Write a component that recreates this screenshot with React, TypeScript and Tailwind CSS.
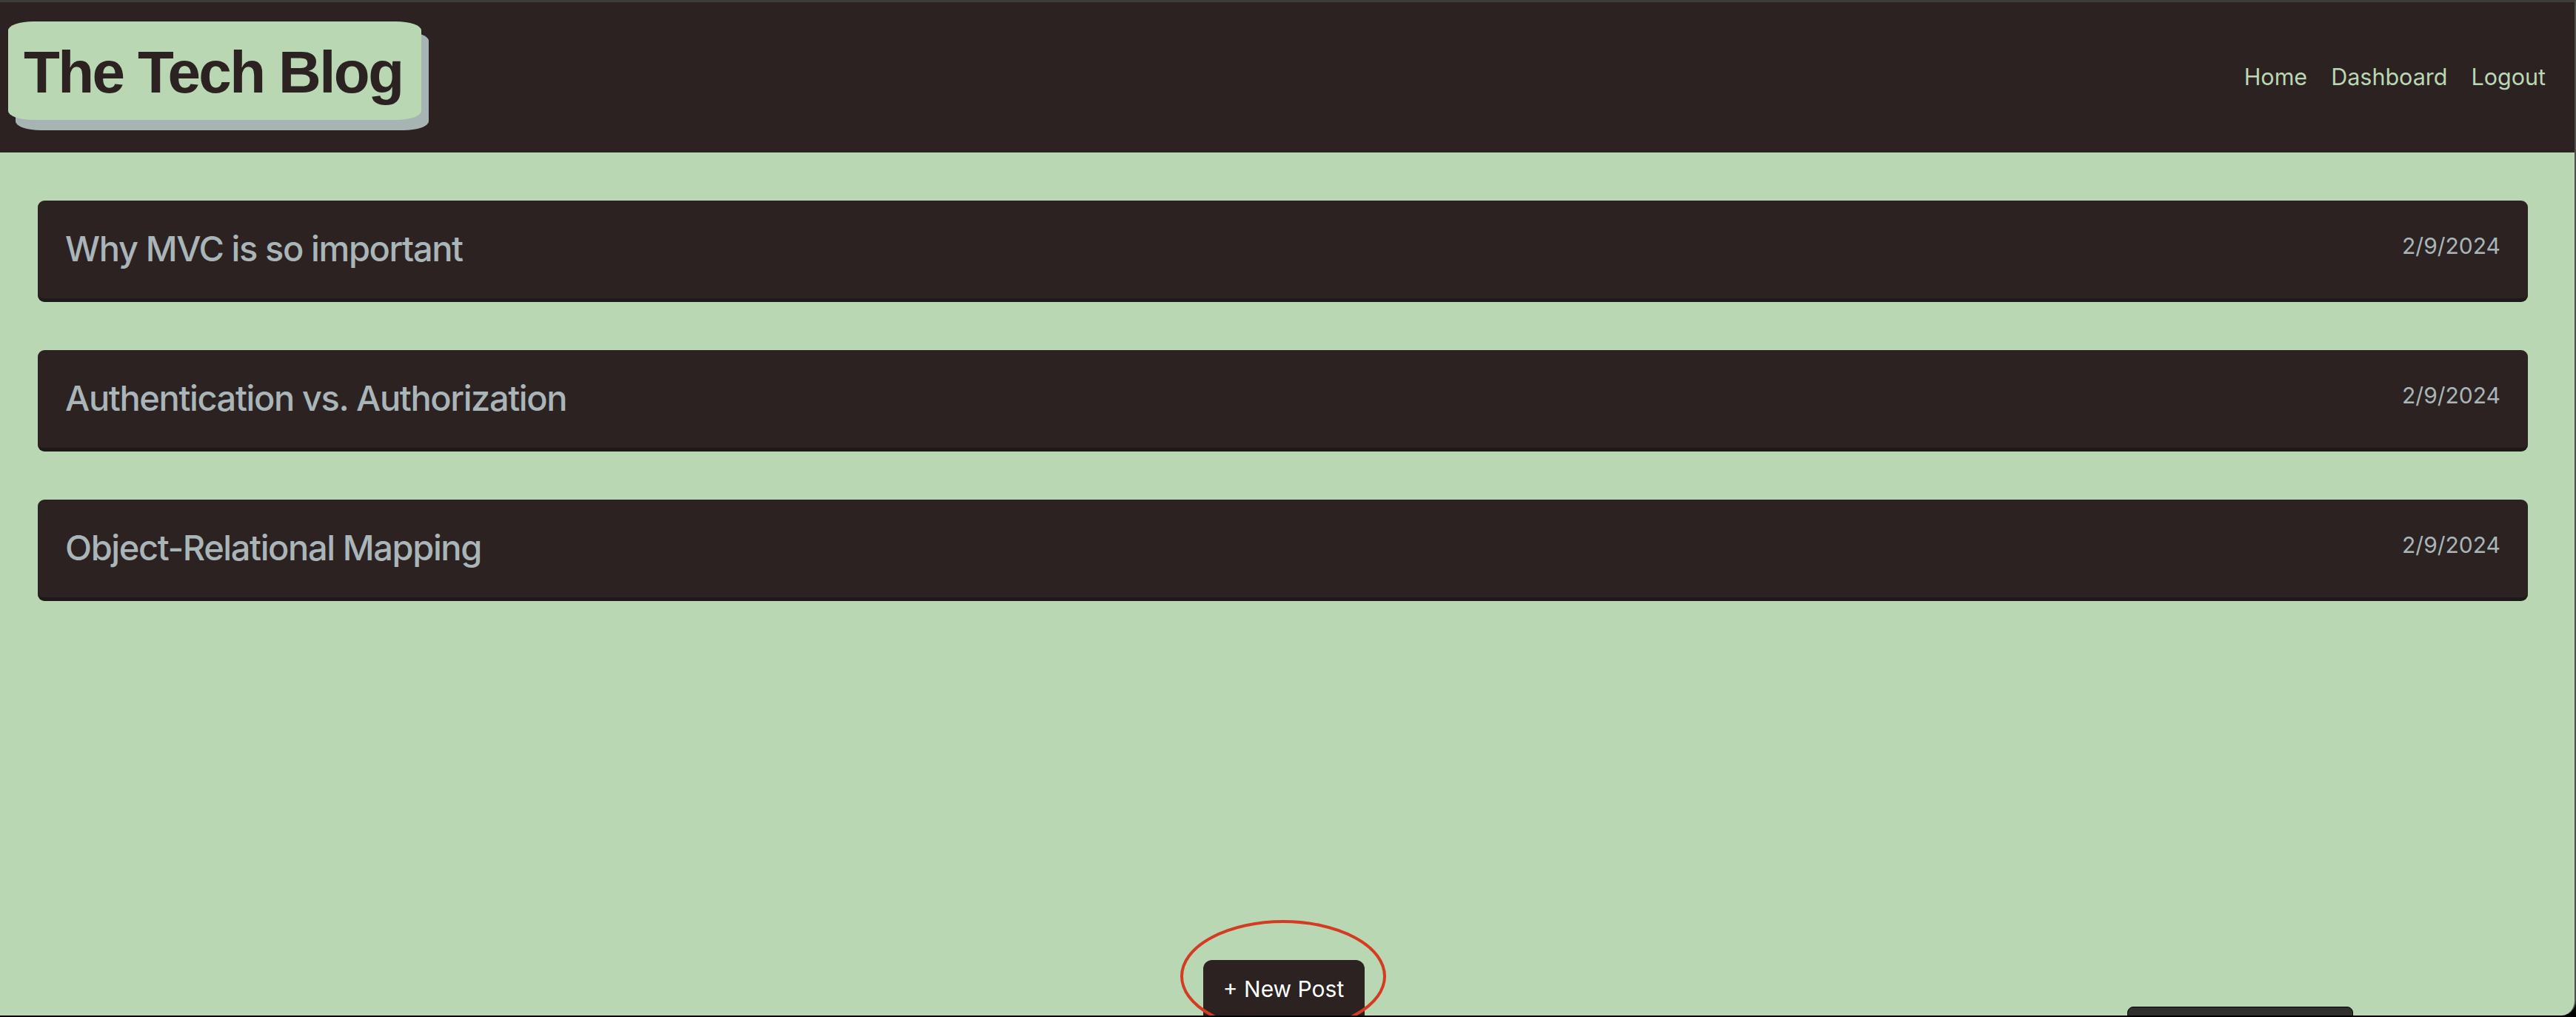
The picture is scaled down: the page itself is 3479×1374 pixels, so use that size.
import React from "react";

const posts = [
  { title: "Why MVC is so important", date: "2/9/2024" },
  { title: "Authentication vs. Authorization", date: "2/9/2024" },
  { title: "Object-Relational Mapping", date: "2/9/2024" },
];

export default function App() {
  return (
    <div className="h-[1374px] w-full bg-black overflow-hidden font-['Inter',sans-serif]">
      <div className="relative h-[1372px] flex flex-col overflow-hidden bg-[#bad7b4] border-t-[3px] border-t-[#3d3d3d] border-r-2 border-r-[#4f4f4f] rounded-br-[20px]">
        <header className="h-[203px] shrink-0 bg-[#2b2221] flex justify-between items-start pl-[11px] pr-[39px] pt-[26px]">
          <div className="w-[558px] h-[133px] bg-[#bad7b4] rounded-[34px_/_12px] shadow-[10px_14px_0_#a7b4b4] flex items-center pl-[21px] pt-[4px]">
            <h1 className="font-['Liberation_Sans',Arial,sans-serif] font-bold text-[80px] leading-none tracking-[-2.6px] text-[#2b2221]">
              The Tech Blog
            </h1>
          </div>
          <nav className="self-start mt-[60px] flex items-center gap-[32px] text-[30.5px] leading-none text-[#bad7b4]">
            <a href="#">Home</a>
            <a href="#">Dashboard</a>
            <a href="#">Logout</a>
          </nav>
        </header>

        <main className="flex flex-col gap-[65px] pl-[51px] pr-[63px] pt-[65px]">
          {posts.map((p) => (
            <article
              key={p.title}
              className="h-[137px] bg-[#2b2221] rounded-[9px] border-b-[5px] border-b-[#1f1a19] px-[37px] pt-[37px] flex justify-between items-start"
            >
              <h2 className="text-[47px] leading-[56px] font-medium tracking-[-1.4px] text-[#a9b5b8]">
                {p.title}
              </h2>
              <span className="mt-[6px] text-[30px] leading-[36px] text-[#a9b5b8]">
                {p.date}
              </span>
            </article>
          ))}
        </main>

        <div className="flex-1" />

        <div className="flex justify-center pr-[10px] mb-[-15px]">
          <button className="w-[218px] h-[90px] bg-[#2b2221] rounded-[12px] flex justify-center pt-[21px] text-white text-[30px] leading-[36px]">
            + New Post
          </button>
        </div>

        <svg
          className="absolute left-[1592px] top-[1238px] pointer-events-none"
          width="284"
          height="160"
          viewBox="0 0 284 160"
        >
          <ellipse cx="141" cy="78" rx="137" ry="74" fill="none" stroke="#d33c22" strokeWidth="4" />
        </svg>

        <div className="absolute left-[2873px] top-[1357px] w-[305px] h-[30px] bg-[#30302c] border border-black rounded-t-[8px]" />
      </div>
    </div>
  );
}
